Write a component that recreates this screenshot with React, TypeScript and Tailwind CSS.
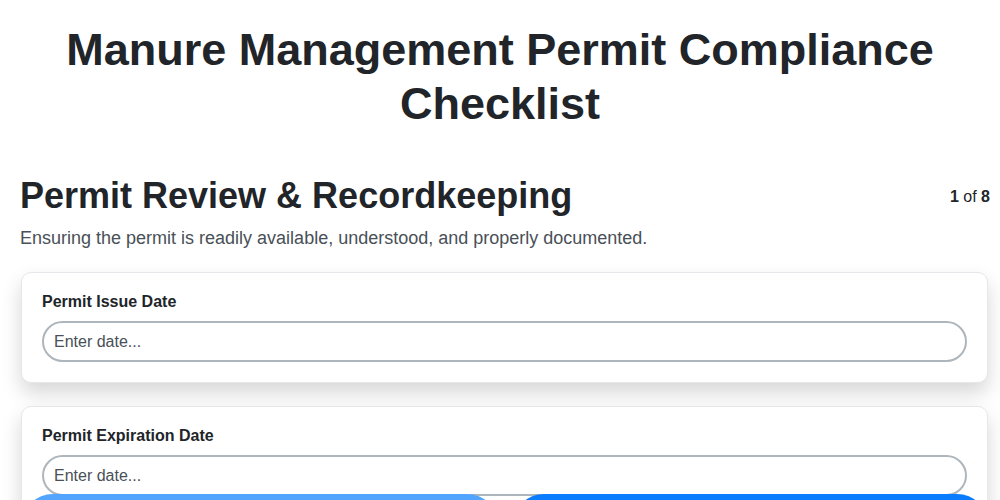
import React from "react";

function Field({ label }: { label: string }) {
  return (
    <div className="ml-[1px] mr-[2px] rounded-[10px] border border-[#e5e7eb] bg-white p-5 shadow-[0_10px_20px_rgba(0,0,0,0.16)]">
      <label className="block text-[16px] font-bold leading-[18px] text-[#212529]">{label}</label>
      <input
        type="text"
        placeholder="Enter date..."
        className="mt-[10px] block h-[41px] w-full rounded-full border-2 border-[#adb5bd] bg-white px-[10px] text-[16px] text-[#212529] placeholder:text-[#495057] outline-none"
      />
    </div>
  );
}

export default function App() {
  return (
    <div className="relative h-[500px] overflow-hidden bg-white font-['Liberation_Sans',Arial,sans-serif] text-[#212529]">
      <h1 className="pt-[23px] text-center text-[45px] font-bold leading-[54px] text-[#212529]">
        Manure Management Permit Compliance
        <br />
        Checklist
      </h1>
      <div className="pl-5 pr-[10px] pt-[44px]">
        <div className="flex items-start justify-between">
          <h2 className="text-[36px] font-bold leading-[42px] text-[#212529]">Permit Review &amp; Recordkeeping</h2>
          <div className="pt-[10px] text-[16px] text-[#212529]">
            <span className="font-bold">1</span> of <span className="font-bold">8</span>
          </div>
        </div>
        <p className="mt-[9px] text-[18px] leading-[24px] text-[#495057]">
          Ensuring the permit is readily available, understood, and properly documented.
        </p>
        <div className="mt-[22px] flex flex-col gap-[23px]">
          <Field label="Permit Issue Date" />
          <Field label="Permit Expiration Date" />
        </div>
      </div>
      <div className="fixed bottom-0 left-0 right-0 flex translate-y-[56px] gap-[15px] pl-[22px] pr-[12px]">
        <button aria-label="Previous" className="h-[62px] flex-1 rounded-full bg-[#52a5ff]" />
        <button aria-label="Next" className="h-[62px] flex-1 rounded-full bg-[#0a7cff]" />
      </div>
    </div>
  );
}
